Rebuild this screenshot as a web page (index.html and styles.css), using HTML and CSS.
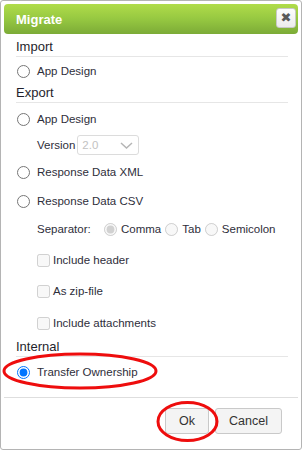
FILE: index.html
```html
<!DOCTYPE html>
<html lang="en">
<head>
    <meta charset="UTF-8">
    <meta name="viewport" content="width=device-width, initial-scale=1.0">
    <title>Migrate</title>
    <link rel="stylesheet" href="styles.css">
</head>
<body>
    <div class="dialog">
        <div class="titlebar">
            <span class="titlebar-text">Migrate</span>
            <button class="close-btn" title="Close">&#10006;</button>
        </div>

        <div class="content">
            <div class="section first">Import</div>
            <label class="row row-import">
                <input type="radio" name="mode"> <span>App Design</span>
            </label>

            <div class="section">Export</div>
            <label class="row row-app">
                <input type="radio" name="mode"> <span>App Design</span>
            </label>
            <div class="row row-version sub">
                <span class="sub-label">Version</span>
                <span class="select-wrap">
                    <select disabled><option>2.0</option></select>
                    <svg class="chevron" width="13" height="7" viewBox="0 0 13 7">
                        <path d="M1 1 L6.5 6 L12 1" fill="none" stroke="#b5b5b5" stroke-width="1.5"/>
                    </svg>
                </span>
            </div>
            <label class="row row-xml">
                <input type="radio" name="mode"> <span>Response Data XML</span>
            </label>
            <label class="row row-csv">
                <input type="radio" name="mode"> <span>Response Data CSV</span>
            </label>
            <div class="row row-separator sub">
                <span class="sep-label">Separator:</span>
                <label class="sep-option"><input type="radio" name="sep" checked disabled> <span>Comma</span></label>
                <label class="sep-option"><input type="radio" name="sep" disabled> <span>Tab</span></label>
                <label class="sep-option"><input type="radio" name="sep" disabled> <span>Semicolon</span></label>
            </div>
            <label class="row row-check first-check sub">
                <input type="checkbox" disabled> <span>Include header</span>
            </label>
            <label class="row row-check sub">
                <input type="checkbox" disabled> <span>As zip-file</span>
            </label>
            <label class="row row-check sub">
                <input type="checkbox" disabled> <span>Include attachments</span>
            </label>

            <div class="section">Internal</div>
            <label class="row row-transfer">
                <input type="radio" name="mode" checked> <span>Transfer Ownership</span>
            </label>
        </div>

        <div class="footer">
            <button class="btn">Ok</button>
            <button class="btn">Cancel</button>
        </div>

        <!-- red annotation marks -->
        <svg class="annotations" width="303" height="451" viewBox="0 0 303 451">
            <ellipse cx="80" cy="371" rx="76" ry="17" fill="none" stroke="#ee0d0d" stroke-width="3"/>
            <ellipse cx="187.5" cy="421.5" rx="29.5" ry="19" fill="none" stroke="#ee0d0d" stroke-width="3"/>
        </svg>
    </div>
</body>
</html>
```

FILE: styles.css
```css
body {
    margin: 0;
    font-family: "Liberation Sans", Arial, sans-serif;
    background-color: #fff;
}

.dialog {
    position: relative;
    width: 294px;
    padding: 3px;
    border: 1px solid #b4b4b4;
    border-radius: 3px;
    background: #fff;
}

.titlebar {
    height: 30px;
    display: flex;
    align-items: center;
    justify-content: space-between;
    padding: 0 2px 0 12px;
    border-radius: 4px;
    background: linear-gradient(to bottom, #b0dc4a 0%, #96c841 50%, #7cab37 100%);
}

.titlebar-text {
    color: #fff;
    font-size: 13px;
    font-weight: bold;
}

.close-btn {
    width: 20px;
    height: 20px;
    padding: 0;
    margin-top: -2px;
    border: 1px solid #c8c8c8;
    border-radius: 3px;
    background: linear-gradient(to bottom, #fdfdfd, #ececec);
    color: #595959;
    font-size: 13px;
    line-height: 18px;
    font-family: "DejaVu Sans", sans-serif;
}

.content {
    padding: 0 10px 10px 12px;
}

.section {
    font-size: 13px;
    line-height: 16px;
    color: #1f1f2c;
    padding-bottom: 1px;
    border-bottom: 1px solid #e6e6e6;
}

.section.first {
    margin-top: 5px;
}

.row {
    display: flex;
    align-items: center;
    height: 30px;
    font-size: 11.5px;
    color: #2e2e3a;
}

.row input[type="radio"],
.row input[type="checkbox"] {
    width: 13px;
    height: 13px;
    margin: 0 7px 0 1px;
}

.row-import { height: 28px; }
.row-app { height: 32px; }
.row-version { height: 20px; }
.row-xml { height: 34px; }
.row-csv { height: 24px; }
.row-separator { height: 32px; }
.row-check { height: 32px; }
.row-check.first-check { height: 30px; }
.row-transfer { height: 30px; }

.sub {
    padding-left: 21px;
}

.row.sub input[type="checkbox"] {
    margin: 0 3px 0 0;
}

.sub-label {
    margin-right: 2px;
}

.select-wrap {
    position: relative;
    display: inline-block;
}

.select-wrap select {
    appearance: none;
    width: 62px;
    height: 20px;
    padding: 0 0 0 4px;
    border: 1px solid #dcdcdc;
    border-radius: 3px;
    background: #fff;
    color: #c2c2c2;
    font-family: inherit;
    font-size: 11.5px;
    opacity: 1;
}

.chevron {
    position: absolute;
    right: 6px;
    top: 7px;
}

.sep-label {
    width: 67px;
}

.sep-option {
    display: flex;
    align-items: center;
    margin-right: 4px;
}

.row .sep-option input[type="radio"] {
    margin: 0 4px 0 0;
}

.footer {
    display: flex;
    justify-content: flex-end;
    gap: 6px;
    padding: 10px 16px 12px 0;
    border-top: 1px solid #dedede;
}

.btn {
    height: 26px;
    padding: 0 13px;
    border: 1px solid #c9c9c9;
    border-radius: 3px;
    background: #f4f4f4;
    color: #333;
    font-family: inherit;
    font-size: 12.5px;
}

.annotations {
    position: absolute;
    top: -1px;
    left: -1px;
    pointer-events: none;
}
```
